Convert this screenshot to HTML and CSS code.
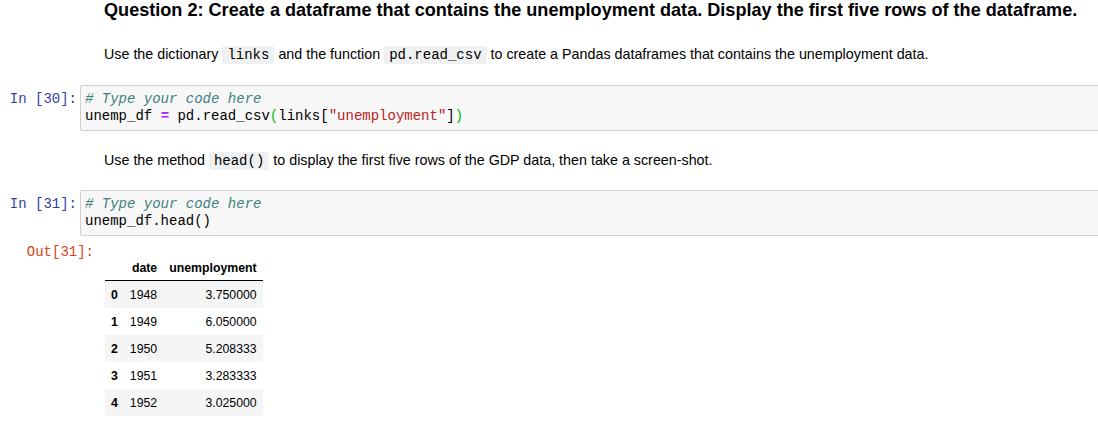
FILE: index.html
```html
<!DOCTYPE html>
<html>
<head>
<meta charset="utf-8">
<link rel="stylesheet" href="styles.css">
</head>
<body>
<div class="nb">
  <div class="md md-first">
    <h3 class="q">Question 2: Create a dataframe that contains the unemployment data. Display the first five rows of the dataframe.</h3>
    <p class="para">Use the dictionary <code class="ic">links</code> and the function <code class="ic">pd.read_csv</code> to create a Pandas dataframes that contains the unemployment data.</p>
  </div>

  <div class="cell cell-1">
    <div class="prompt in">In&nbsp;[30]:</div>
    <div class="input"><span class="cm"># Type your code here</span>
unemp_df <span class="op">=</span> pd.read_csv<span class="br">(</span>links[<span class="st">"unemployment"</span>]<span class="br">)</span></div>
  </div>

  <div class="md md-second">
    <p class="para">Use the method <code class="ic">head()</code> to display the first five rows of the GDP data, then take a screen-shot.</p>
  </div>

  <div class="cell cell-2">
    <div class="prompt in">In&nbsp;[31]:</div>
    <div class="input"><span class="cm"># Type your code here</span>
unemp_df.head()</div>
  </div>

  <div class="out">
    <div class="prompt outp">Out[31]:</div>
    <div class="out-body">
      <table class="df">
        <thead>
          <tr><th></th><th>date</th><th>unemployment</th></tr>
        </thead>
        <tbody>
          <tr><th>0</th><td>1948</td><td>3.750000</td></tr>
          <tr><th>1</th><td>1949</td><td>6.050000</td></tr>
          <tr><th>2</th><td>1950</td><td>5.208333</td></tr>
          <tr><th>3</th><td>1951</td><td>3.283333</td></tr>
          <tr><th>4</th><td>1952</td><td>3.025000</td></tr>
        </tbody>
      </table>
    </div>
  </div>
</div>
</body>
</html>
```

FILE: styles.css
```css
html, body {
  margin: 0;
  padding: 0;
  background: #ffffff;
  overflow: hidden;
}

.nb {
  font-family: "Liberation Sans", Arial, Helvetica, sans-serif;
  color: #000000;
  font-size: 14px;
}

.md {
  padding-left: 104px;
}

.q {
  margin: 0;
  font-size: 18.1px;
  line-height: 20px;
  font-weight: bold;
  white-space: nowrap;
}

.para {
  margin: 0;
  font-size: 14.3px;
  line-height: 18px;
  white-space: nowrap;
}

.md-first .para {
  margin-top: 25px;
}

.md-second {
  padding-top: 20px;
}

.ic {
  font-family: "Liberation Mono", "Courier New", monospace;
  font-size: 14px;
  background: #eff0f1;
  padding: 1px 5px;
  border-radius: 2px;
}

.cell {
  display: flex;
  align-items: flex-start;
}

.cell-1 {
  margin-top: 21px;
}

.cell-2 {
  margin-top: 20px;
}

.prompt {
  width: 77px;
  flex: none;
  text-align: right;
  font-family: "Liberation Mono", "Courier New", monospace;
  font-size: 14px;
  line-height: 17px;
  padding-top: 6px;
  box-sizing: border-box;
}

.in {
  color: #303f9f;
}

.input {
  flex: 1;
  margin-left: 3px;
  margin-right: -4px;
  background: #f7f7f7;
  border: 1px solid #cfcfcf;
  border-radius: 2px;
  padding: 5px 4px;
  font-family: "Liberation Mono", "Courier New", monospace;
  font-size: 14px;
  line-height: 17px;
  white-space: pre;
  color: #000;
}

.cm {
  color: #408080;
  font-style: italic;
}

.op {
  color: #aa22ff;
  font-weight: bold;
}

.br {
  color: #00bb00;
}

.st {
  color: #ba2121;
}

.out {
  display: flex;
  align-items: flex-start;
  margin-top: 6px;
}

.outp {
  width: 94px;
  color: #d84315;
  padding-top: 2px;
}

.out-body {
  padding-left: 11px;
  padding-top: 13px;
}

.df {
  border-collapse: collapse;
  border-spacing: 0;
  font-size: 12.3px;
  font-family: "Liberation Sans", Arial, Helvetica, sans-serif;
  color: #000;
}

.df th,
.df td {
  text-align: right;
  vertical-align: middle;
  padding: 0 6px;
  height: 27px;
  line-height: 14px;
  white-space: nowrap;
}

.df thead th {
  height: 25px;
  font-weight: bold;
  border-bottom: 1px solid #000;
}

.df tbody th {
  font-weight: bold;
}

.df tbody tr:nth-child(odd) {
  background: #f5f5f5;
}
```
